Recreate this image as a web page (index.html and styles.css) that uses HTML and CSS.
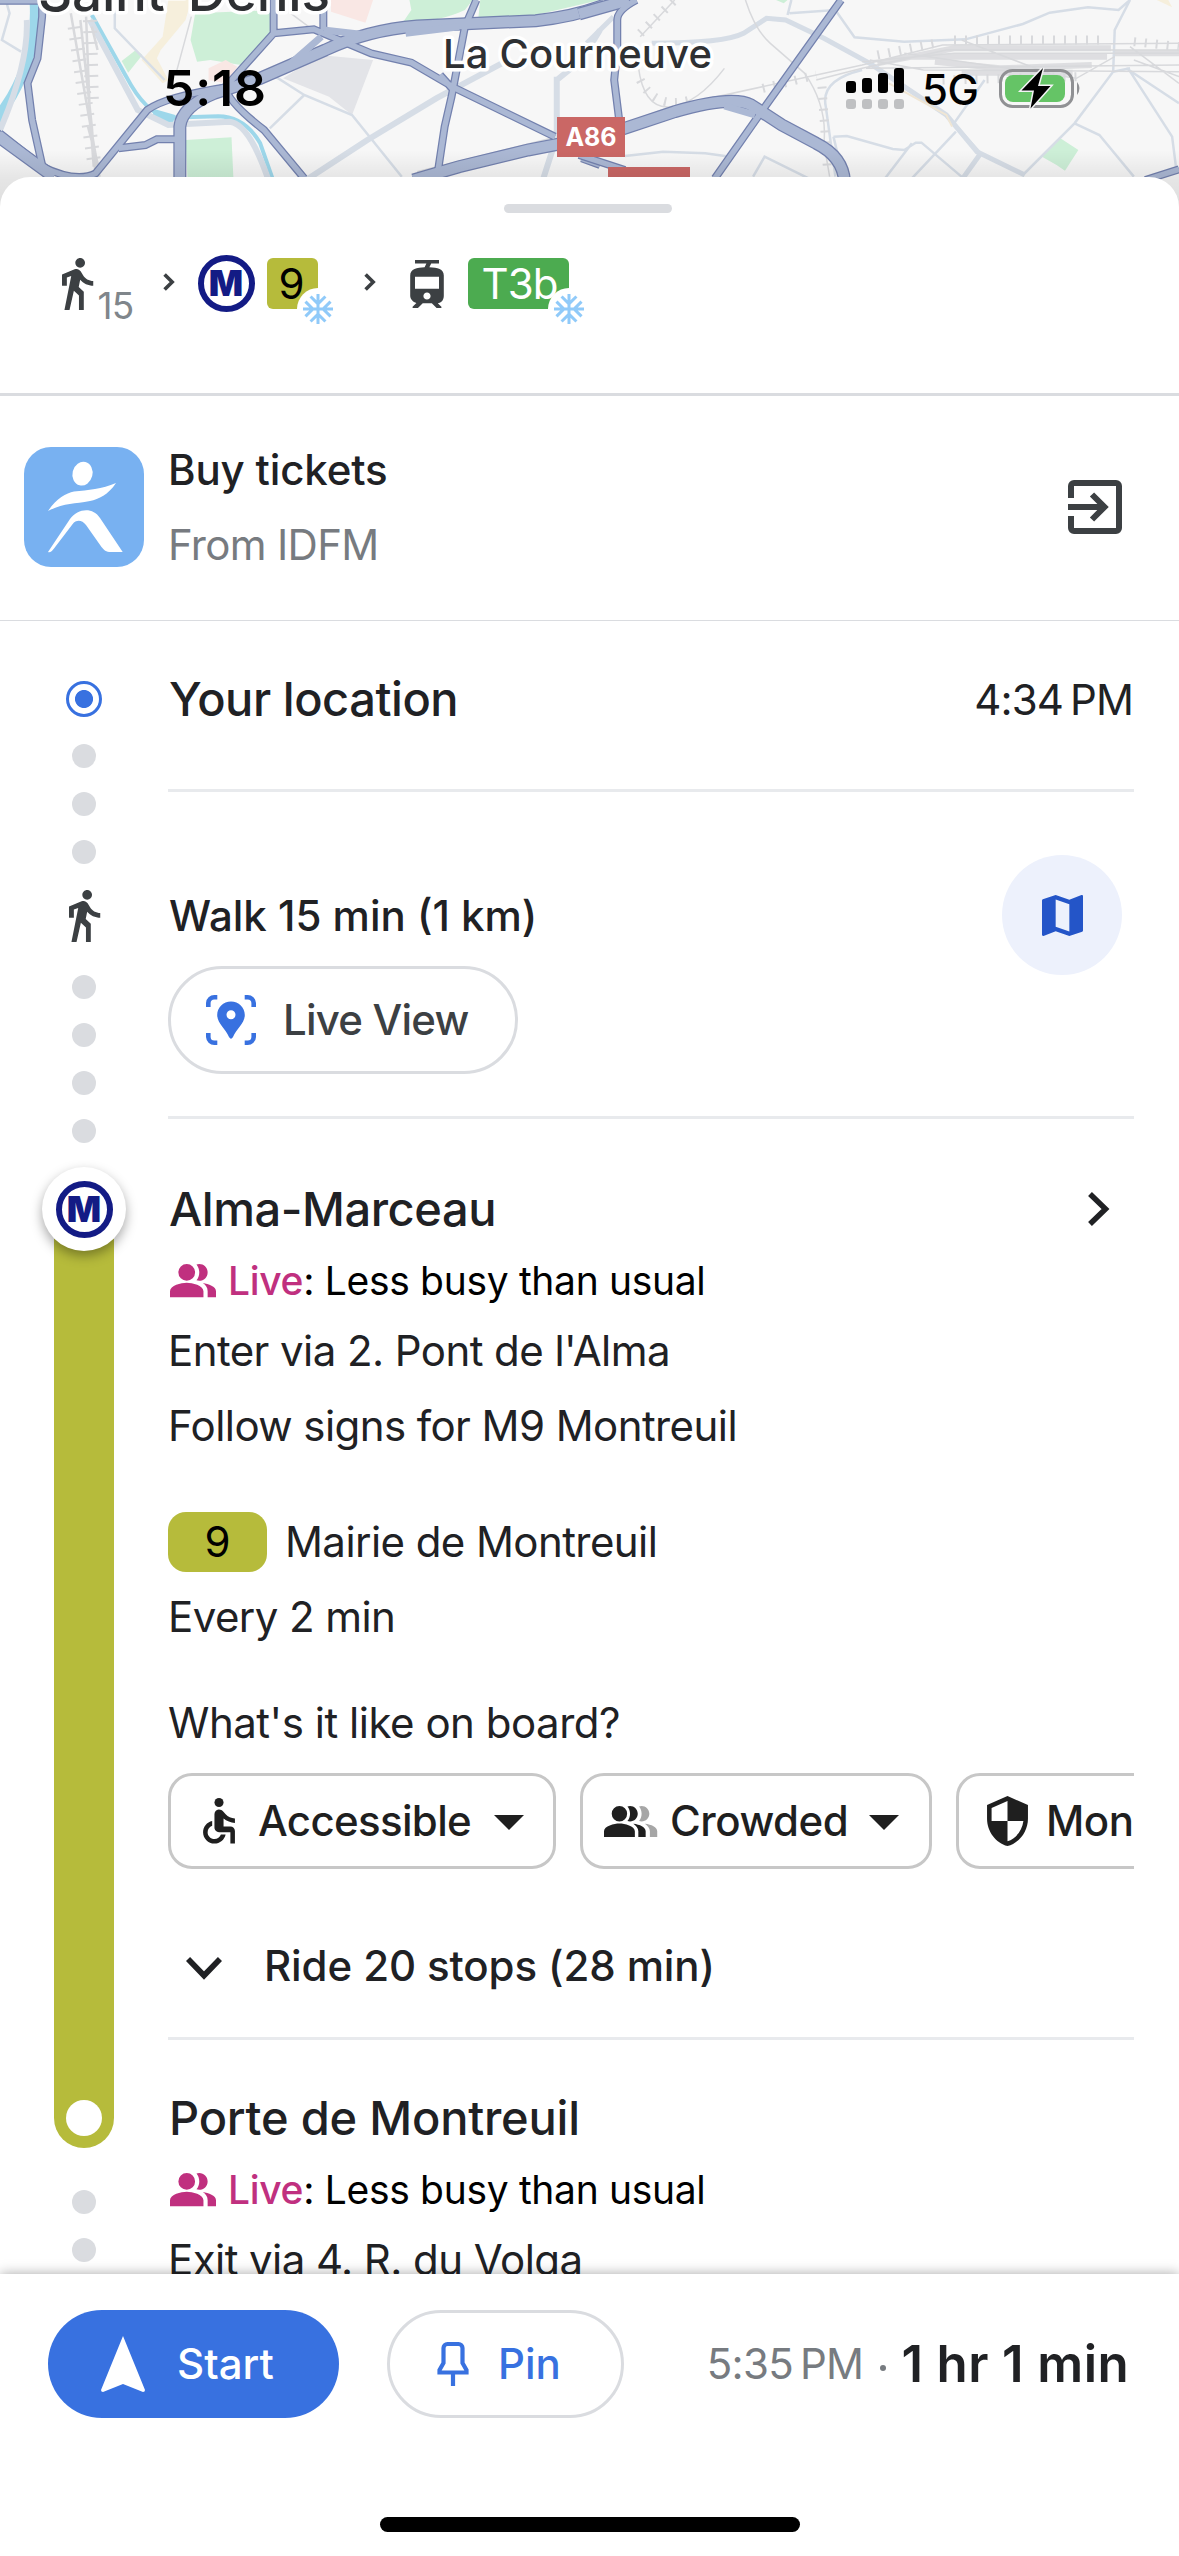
FILE: index.html
```html
<!DOCTYPE html>
<html lang="en">
<head>
<meta charset="utf-8">
<title>Transit directions</title>
<link rel="stylesheet" href="styles.css">
</head>
<body>
<svg class="sprite" aria-hidden="true">
  <symbol id="walk" viewBox="6 1.5 13 21.5"><path d="M13.5 5.5c1.1 0 2-.9 2-2s-.9-2-2-2-2 .9-2 2 .9 2 2 2zM9.8 8.9L7 23h2.1l1.8-8 2.1 2v6h2v-7.5l-2.1-2 .6-3C14.8 12 16.8 13 19 13v-2c-1.9 0-3.5-1-4.3-2.4l-1-1.6c-.4-.6-1-1-1.7-1-.3 0-.5.1-.8.1L6 8.3V13h2V9.6l1.8-.7z"/></symbol>
  <symbol id="snow" viewBox="0 0 24 24"><path d="M22 11h-4.17l3.24-3.24-1.41-1.42L15 11h-2V9l4.66-4.66-1.42-1.41L13 6.17V2h-2v4.17L7.76 2.93 6.34 4.34 11 9v2H9L4.34 6.34 2.93 7.76 6.17 11H2v2h4.17l-3.24 3.24 1.41 1.42L9 13h2v2l-4.66 4.66 1.42 1.41L11 17.83V22h2v-4.17l3.24 3.24 1.42-1.41L13 15v-2h2l4.66 4.66 1.41-1.42L17.83 13H22z"/></symbol>
  <symbol id="group" viewBox="1 4 22 16"><path d="M16.67 13.13C18.04 14.06 19 15.32 19 17v3h4v-3c0-2.18-3.57-3.47-6.33-3.87zM9 12a4 4 0 1 0 0-8 4 4 0 0 0 0 8zM15 12c2.21 0 4-1.79 4-4s-1.79-4-4-4c-.47 0-.91.1-1.33.24C14.5 5.27 15 6.58 15 8s-.5 2.73-1.33 3.76c.42.14.86.24 1.33.24zM9 13c-2.67 0-8 1.34-8 4v3h16v-3c0-2.66-5.33-4-8-4z"/></symbol>
  <symbol id="next" viewBox="0 0 12 18"><path d="M1.6 1.4 9.2 9l-7.6 7.6" fill="none" stroke="#3c4043" stroke-width="3.6"/></symbol>
</svg>

<header class="map">
  <svg class="map-art" viewBox="0 0 1179 220" width="1179" height="220">
    <defs>
      <g id="roads-left">
        <path d="M0 2H110V50L98 175 72 250 84 360 112 505M0 400 110 500Q200 550 250 520L385 330Q430 290 600 260M310 445 380 435 410 418H460M715 0V100L590 260Q590 300 690 390L795 535M715 100 820 88 970 160 1075 188 1190 265 1450 410M845 0V90M1245 0 1215 80 1180 290 1162 380 1145 510M1150 225 1185 270M1520 475 1568 495"/>
      </g>
      <g id="highways-left">
        <path d="M470 540V380Q475 320 560 280L680 235 850 150Q960 90 1090 78L1400 62Q1500 50 1580 15M-10 405 140 530M1080 540 1200 500 1380 450 1480 428"/>
      </g>
      <g id="roads-right">
        <path d="M685 0 480 330 355 535M150 0Q100 30 100 60V150L92 240 105 360M0 465 120 510M1480 540 1568 508"/>
      </g>
      <g id="highways-right">
        <path d="M0 42 130 0M80 400 250 335Q400 285 450 315L530 375 620 430Q690 470 694 545"/>
      </g>
    </defs>
    <rect width="1179" height="220" fill="#f7f7f7"/>
    <g transform="scale(.38265 .33333)">
      <path fill="#cdefd7" d="M510 40 725 30 710 110 630 195 550 180 515 185 498 120zM1070 0H1235L1215 30Q1150 65 1050 72L1075 30zM1255 0H1568L1400 45 1250 55zM318 183 355 150 372 165 335 218zM485 420 605 412 610 535H490z"/>
      <path fill="#f9e7e4" d="M865 0H975L955 68 865 35zM545 205 590 180 620 200 590 250 545 240z"/>
      <path fill="#f6efdc" d="M440 0H500L485 60 420 150 410 175 440 240 425 250 370 180 425 110z"/>
      <path fill="#e3e4e8" d="M740 235 835 165 975 180 920 345 860 290z"/>
      <g class="water"><path d="M90 0Q100 150 30 290L-15 370" stroke-width="10"/><path d="M240 45 330 230Q380 340 440 353L570 349Q640 350 680 430L712 535" stroke-width="4"/><path d="M400 340 455 358" stroke-width="9"/></g>
      <g class="minor" stroke-width="2.500"><path d="M15 0 25 40 5 120 55 155M300 30V85L430 240M500 265 M720 230 795 285L920 345 1050 530M795 285 705 385"/><path stroke-width="6" d="M70 60Q75 190 0 390M235 60 360 330 440 375 600 365Q650 370 700 535M800 540 960 420 1140 295 1320 185M1455 230V410L1420 535M1568 90 1520 180 1455 240"/></g>
      <g class="rail"><path stroke-width="2.500" d="M185 40 240 400 260 530M210 60 240 380 250 530M225 50 235 350 245 500M240 80 255 150M230 380 262 520"/><path stroke-width="1.500" d="M500 50 460 220M1090 515 1440 415M760 40 830 100"/><path stroke-width="14" stroke-dasharray="2 9" d="M195 80 245 480M235 60 240 300"/></g>
      <use href="#roads-left" class="casing"/><use href="#highways-left" class="casing wide"/>
      <use href="#roads-left" class="road"/><use href="#highways-left" class="road wide"/>
      <path d="M845 90 960 105M840 110 760 190M1060 100 1200 80" class="ramp"/>
    </g>
    <g transform="translate(579) scale(.38265 .33333)">
      <path fill="#cdefd7" d="M515 0H545L535 10zM1210 470 1258 415 1305 450 1270 512 1248 495z"/>
      <path fill="#f6efdc" d="M1510 0H1540L1550 22z"/>
      <g class="minor" stroke-width="2.500"><path d="M550 40 670 30 720 112 850 125 1010 118 1160 72 1230 38 1330 22 1410 30 1440 0 1400 90 1396 215 1295 370 1160 525M545 45 555 0M1060 240 980 370 1050 460M1430 205 1568 310M1435 205 1550 410 1560 500M1396 215 1440 205M1295 370 1360 405 1450 530M665 410 700 408 820 447 850 450 880 428 895 428 1005 535M800 535 870 430M985 395 870 535M665 410 690 530M120 468 220 455 330 460 395 470M455 530 485 470 600 535M740 210Q630 240 645 320L670 530"/><path stroke-width="5" d="M90 50 20 130M190 130Q380 130 430 100L490 55 540 60 640 115 760 190 960 345 1040 455 1165 525M1050 460 1000 540"/></g>
      <path d="M810 250 960 345 975 380" class="sand"/>
      <g class="rail"><path stroke-width="1.500" d="M435 0Q460 90 500 130L590 220Q650 320 640 430L655 530M250 0 160 110M155 200Q170 330 240 320T380 205M120 370 240 320 620 225 740 195 950 135 1568 130M620 240 740 205 960 150 1568 150M740 185 980 160 1568 160M750 205 1568 195M760 180 900 210 1568 215M850 160 1300 235 1400 170M1000 120 1250 230M1568 230 1450 180M1440 140 1568 250"/><path stroke-width="6" opacity=".8" d="M780 190 980 145 1390 145M930 185 1100 205 1340 195M1400 160H1568M860 170H1380M1000 218H1290"/><path stroke-width="9" stroke-dasharray="2 9" d="M980 120H1370M950 240 1300 230M780 165 930 130M1450 125 1568 140M635 260 650 520M160 100 250 0M480 265 620 225M160 240Q200 330 290 300"/></g>
      <use href="#roads-right" class="casing"/><use href="#highways-right" class="casing wide"/>
      <use href="#roads-right" class="road"/><use href="#highways-right" class="road wide"/>
      <path d="M380 318 460 345" class="ramp"/>
    </g>
    <g class="place"><text x="38" y="11" font-size="53" textLength="292">Saint-Denis</text><text x="443" y="68" font-size="40" textLength="269">La Courneuve</text></g>
    <rect x="557" y="117" width="68" height="40" fill="#ca6765"/><rect x="608" y="167" width="82" height="40" fill="#ca6765"/>
    <g class="shield"><text x="591" y="146">A86</text><text x="649" y="196">N186</text></g>
    <rect y="150" width="1179" height="70" fill="url(#shade)"/>
    <linearGradient id="shade" x2="0" y2="1"><stop stop-opacity="0"/><stop offset=".4" stop-opacity=".07"/><stop offset="1" stop-opacity=".12"/></linearGradient>
  </svg>
  <div class="status">
    <span class="clock">5:18</span>
    <svg class="signal" viewBox="0 0 58 41" width="58" height="41"><g><rect y="13" width="10" height="12" rx="3"/><rect x="16" y="10" width="10" height="15" rx="3"/><rect x="32" y="5" width="10" height="20" rx="3"/><rect x="48" width="10" height="25" rx="3"/></g><g fill="#bfc0c2"><rect y="31" width="10" height="10" rx="3"/><rect x="16" y="31" width="10" height="10" rx="3"/><rect x="32" y="31" width="10" height="10" rx="3"/><rect x="48" y="31" width="10" height="10" rx="3"/></g></svg>
    <span class="network">5G</span>
    <svg class="battery" viewBox="0 0 84 41" width="84" height="41"><rect x="1.5" y="2.5" width="72" height="36" rx="12" fill="none" stroke="#909194" stroke-width="3"/><rect x="6" y="7" width="60" height="27" rx="8" fill="#65c466"/><path d="M78 14q5 6 0 13z" fill="#909194"/><path d="M44 0 22.500 22.500H35L31.500 40.500 51.500 18H39z" stroke="#f3f4f5" stroke-width="3" paint-order="stroke"/></svg>
  </div>
</header>

<main class="sheet">
  <div class="handle"></div>
  <div class="summary">
    <svg class="ico-walk" width="31.500" height="52"><use href="#walk"/></svg><span class="walk-min">15</span>
    <svg class="next next-a" width="12" height="18"><use href="#next"/></svg>
    <span class="metro metro-lg">M</span>
    <span class="line line-9">9<i class="cool"><svg width="36" height="36"><use href="#snow"/></svg></i></span>
    <svg class="next next-b" width="12" height="18"><use href="#next"/></svg>
    <svg class="tram" viewBox="5 2 14 20" width="34" height="48"><path d="M19 16.940V8.500c0-2.790-2.610-3.400-6.010-3.490l.76-1.510H17V2H7v1.500h4.750l-.76 1.520C7.860 5.110 5 5.730 5 8.500v8.440c0 1.450 1.190 2.660 2.590 2.970L6 21.500v.5h2.230l2-2H14l2 2h2v-.5L16.500 20h-.08c1.690 0 2.580-1.370 2.580-3.060zm-7 1.560c-.83 0-1.500-.67-1.500-1.500s.67-1.500 1.500-1.500 1.500.67 1.500 1.500-.67 1.500-1.500 1.500zm5-4.500H7V9h10v5z"/></svg>
    <span class="line line-t3b">T3b<i class="cool"><svg width="36" height="36"><use href="#snow"/></svg></i></span>
  </div>

  <section class="tickets">
    <svg class="idfm" viewBox="0 0 120 120" width="120" height="120"><rect width="120" height="120" rx="27" fill="#78b1f1"/><g fill="#fff"><ellipse cx="58.500" cy="26.700" rx="10" ry="12" transform="rotate(14 58.500 26.700)"/><path d="M24 64C32 52 42 46 50 44.500 64 43 78 42 92 36 84 48 75 52 66 54 50 57 40 56 24 64Z"/><path d="M24 105 46 72C54 61 69 60 76 71L98.700 105H87C82 105 80 103 77.500 100L62 78C58 72.500 52 72.500 48.700 77L30 101.500C28 104 26 106 24 105Z"/></g></svg>
    <div class="tickets-text"><p class="strong buy">Buy tickets</p><p class="muted">From IDFM</p></div>
    <svg class="exit" viewBox="0 0 54 54" width="54" height="54"><path d="M3 18V6a3 3 0 0 1 3-3H48a3 3 0 0 1 3 3V48a3 3 0 0 1-3 3H6a3 3 0 0 1-3-3V36M0 27H36M24 14.500 36.500 27 24 39.500" fill="none" stroke="#3c4043" stroke-width="6"/></svg>
  </section>

  <section class="timeline">
    <div class="rail-col">
      <span class="origin"></span>
      <span class="dot"></span><span class="dot"></span><span class="dot"></span>
      <svg class="ico-walk step-walk" width="31.500" height="52"><use href="#walk"/></svg>
      <span class="dot"></span><span class="dot"></span><span class="dot"></span><span class="dot"></span>
      <div class="track"><span class="station"><span class="metro metro-lg">M</span></span><span class="stop"></span></div>
      <span class="dot"></span><span class="dot"></span>
    </div>
    <div class="steps">
      <div class="step start"><h2 class="loc">Your location</h2><span class="time">4:34<span class="thin"></span>PM</span></div>
      <div class="step walking">
        <div class="walk-row"><p class="strong wk">Walk 15 min (1 km)</p><span class="map-btn"><svg viewBox="3 3 18 18" width="41" height="41"><path d="M20.500 3l-.16.03L15 5.100 9 3 3.360 4.900c-.21.07-.36.25-.36.48V20.500c0 .28.22.5.5.5l.16-.03L9 18.900l6 2.100 5.640-1.900c.21-.07.36-.25.36-.48V3.500c0-.28-.22-.5-.5-.5zM15 19l-6-2.110V5l6 2.110V19z" fill="#2455c8"/></svg></span></div>
        <span class="pill live-view"><svg viewBox="0 0 50 50" width="50" height="50"><path d="M2.300 12V8a6 6 0 0 1 6-5.700h3M38.700 2.300h3a6 6 0 0 1 6 5.700v4M47.700 38v4a6 6 0 0 1-6 5.700h-3M11.300 47.700h-3a6 6 0 0 1-6-5.700v-4" fill="none" stroke="#3871e0" stroke-width="4.600"/><path fill-rule="evenodd" d="M25 6.500c-7.700 0-13.800 6-13.800 13.500 0 8.500 8.500 14 11.800 22q2 3.500 4 0c3.300-8 11.800-13.500 11.800-22 0-7.500-6.100-13.500-13.800-13.500zm0 8.800a4.500 4.500 0 1 1 0 9 4.500 4.500 0 0 1 0-9z" fill="#3871e0"/></svg>Live View</span>
      </div>
      <div class="step ride">
        <div class="station-row"><h2 class="alma">Alma-Marceau</h2><svg viewBox="0 0 24 36" width="24" height="36"><path d="M3 3 18.500 18 3 33" fill="none" stroke="#202124" stroke-width="5.500"/></svg></div>
        <p class="live"><svg width="46" height="33.500"><use href="#group"/></svg><span><b>Live</b>: Less busy than usual</span></p>
        <p class="body enter">Enter via 2. Pont de l'Alma</p>
        <p class="body follow">Follow signs for M9 Montreuil</p>
        <div class="line-row"><span class="badge">9</span><span class="body">Mairie de Montreuil</span></div>
        <p class="body every">Every 2 min</p>
        <p class="body ask">What's it like on board?</p>
        <div class="chips">
          <span class="chip accessible"><svg viewBox="5 2 14 20" width="32" height="45.500"><circle cx="12" cy="4" r="2"/><path d="M19 13v-2c-1.540.02-3.090-.75-4.070-1.830l-1.290-1.430c-.17-.19-.38-.34-.61-.45-.01 0-.01-.01-.02-.01H13c-.35-.2-.75-.3-1.190-.26C10.760 7.110 10 8.040 10 9.090V15c0 1.100.9 2 2 2h5v5h2v-5.500c0-1.100-.9-2-2-2h-3v-3.450c1.290 1.070 3.250 1.940 5 1.950zm-6.170 5c-.41 1.160-1.520 2-2.830 2-1.660 0-3-1.340-3-3 0-1.310.84-2.410 2-2.830V12.100c-2.280.46-4 2.480-4 4.900 0 2.760 2.240 5 5 5 2.420 0 4.440-1.720 4.900-4h-2.070z"/></svg><span class="lbl">Accessible</span><i class="caret"></i></span>
          <span class="chip crowded"><svg viewBox="1 4 28 16" width="54" height="31"><path id="behind" d="M16.200 13.130C17.500 14.060 18.800 15.320 18.800 17v3h3.800v-3c0-2.180-3-3.470-6.400-3.870zM14.500 12c2.210 0 4-1.790 4-4s-1.790-4-4-4c-.47 0-.91.1-1.330.24C14 5.270 14.500 6.580 14.500 8s-.5 2.730-1.330 3.760c.42.14.86.24 1.330.24z"/><use href="#behind" x="6" fill="#a6a6a6"/><path d="M9 12a4 4 0 1 0 0-8 4 4 0 0 0 0 8zM9 13c-2.670 0-8 1.340-8 4v3h16v-3c0-2.660-5.330-4-8-4z"/></svg><span class="lbl">Crowded</span><i class="caret"></i></span>
          <span class="chip monitored"><svg viewBox="3 1 18 22" width="41" height="50"><path d="M12 1L3 5v6c0 5.550 3.840 10.740 9 12 5.160-1.260 9-6.450 9-12V5l-9-4zm0 10.990h7c-.53 4.120-3.280 7.790-7 8.940V12H5V6.300l7-3.110v8.800z"/></svg><span class="lbl">Monitored</span></span>
        </div>
        <div class="stops"><svg viewBox="0 0 36 24" width="36" height="24"><path d="M2 3 18 19.500 34 3" fill="none" stroke="#202124" stroke-width="5.800"/></svg><p class="strong rd">Ride 20 stops (28 min)</p></div>
      </div>
      <div class="step arrive">
        <h2 class="porte">Porte de Montreuil</h2>
        <p class="live"><svg width="46" height="33.500"><use href="#group"/></svg><span><b>Live</b>: Less busy than usual</span></p>
        <p class="body exit-via">Exit via 4. R. du Volga</p>
      </div>
    </div>
  </section>
</main>

<footer class="actions">
  <div class="action-row">
    <span class="pill go"><svg viewBox="0 0 46 58" width="46" height="58"><path d="M23 1 45 55q0 2-2 2L23 49 3 57q-2 0-2-2z" fill="#fff"/></svg>Start</span>
    <span class="pill pin"><svg viewBox="0 0 32 46" width="32" height="46"><path d="M6.500 7a4 4 0 0 1 4-4h11a4 4 0 0 1 4 4V22L29.500 29v2.500h-27V29L6.500 22zM16 31.500V45" fill="none" stroke="#3871e0" stroke-width="4.200"/></svg>Pin</span>
    <p class="eta"><span>5:35<span class="thin"></span>PM</span><i></i><strong>1 hr 1 min</strong></p>
  </div>
  <div class="home"></div>
</footer>
</body>
</html>
```

FILE: styles.css
```css
* { box-sizing: border-box; }
body { margin: 0; width: 1179px; height: 2556px; overflow: hidden; display: flex; flex-direction: column; background: #fff; color: #202124; font: 400 42px/60px Inter, "Liberation Sans", sans-serif; white-space: nowrap; }
p, h2 { margin: 0; }
svg { display: block; flex: none; }
.sprite { position: absolute; width: 0; height: 0; }

/* Map strip and status bar */
.map { position: relative; height: 177px; flex: none; }
.map-art path, .map-art use { vector-effect: non-scaling-stroke; }
.water { fill: none; stroke: #9dd7ea; }
.minor { fill: none; stroke: #d6dde6; }
.rail { fill: none; stroke: #d8d9dc; }
.sand { fill: none; stroke: #f0e6d4; stroke-width: 2; }
.casing { fill: none; stroke: #7381ae; stroke-width: 8px; }
.casing.wide { stroke-width: 13px; }
.road { fill: none; stroke: #abb8d4; stroke-width: 5.5px; }
.road.wide { stroke-width: 10.5px; }
.ramp { fill: none; stroke: #abb8d4; stroke-width: 7px; }
.place { fill: #2e3033; font-weight: 500; stroke: #fff; stroke-width: 7px; paint-order: stroke; stroke-linejoin: round; }
.shield { fill: #fff; font-size: 25px; font-weight: 700; text-anchor: middle; }
.status { position: absolute; inset: 0 0 auto; display: flex; align-items: center; height: 176px; padding-left: 163px; color: #000; }
.clock { width: 683px; font-size: 50px; font-weight: 600; letter-spacing: .8px; }
.network { margin: 3px 0 0 18px; width: 77px; font-size: 42px; font-weight: 500; letter-spacing: -.5px; }

/* Sheet */
.sheet { position: relative; flex: 1; min-height: 0; overflow: hidden; display: flex; flex-direction: column; background: #fff; border-radius: 30px 30px 0 0; }
.handle { width: 168px; height: 9px; margin: 27px 0 0 504px; border-radius: 5px; background: #dadce0; flex: none; }
.summary { height: 183px; flex: none; display: flex; align-items: flex-start; padding: 45px 0 0 62px; border-bottom: 3px solid #dadce0; }
.ico-walk { fill: #3c4043; }
.walk-min { width: 64px; padding: 18px 0 0 4px; font-size: 37px; color: #80868b; letter-spacing: -.8px; }
.next-a { margin: 15px 0 0 5px; }
.next-b { margin: 15px 0 0 46px; }
.metro { width: 57px; height: 57px; border: 6px solid #131b85; border-radius: 50%; display: grid; place-items: center; color: #131b85; font-size: 36px; font-weight: 900; line-height: 45px; }
.summary .metro { margin: -3px 0 0 23px; }
.line { position: relative; height: 51px; border-radius: 6px; line-height: 51px; margin-left: 12px; }
.line-9 { width: 51px; padding-left: 12px; background: #b6bb3b; color: #000; }
.line-t3b { width: 101px; margin-left: 24px; padding-left: 14px; background: #4cab50; color: #fff; letter-spacing: -.9px; }
.cool { position: absolute; right: -21px; bottom: -21px; width: 42px; height: 42px; padding: 3px; border-radius: 50%; background: #fff; fill: #90caf9; }
.tram { margin: 2px 0 0 34px; fill: #3c4043; }

.tickets { height: 225px; flex: none; display: flex; align-items: center; padding: 0 57px 2px 24px; border-bottom: 1px solid #dadce0; }
.tickets-text { flex: 1; padding: 0 0 0 24px; line-height: 75px; }
.strong { font-weight: 500; }
.buy { letter-spacing: -.15px; }
.muted { color: #777b80; letter-spacing: -.7px; }

/* Timeline */
.timeline { flex: 1; min-height: 0; display: flex; }
.rail-col { width: 168px; padding-top: 60px; display: flex; flex-direction: column; align-items: center; flex: none; }
.rail-col > * { flex: none; }
.origin { width: 36px; height: 36px; margin-bottom: 3px; border: 3px solid #3871e0; border-radius: 50%; background: radial-gradient(circle, #3871e0 8.600px, #fff 9.400px); }
.dot { width: 24px; height: 24px; margin-top: 24px; border-radius: 50%; background: #dadce0; }
.step-walk { margin: 26px 0 9px 2px; }
.track { position: relative; width: 60px; height: 939px; margin: 66px 0 18px; display: flex; align-items: flex-end; justify-content: center; padding-bottom: 12px; border-radius: 0 0 30px 30px; background: #b6bb3b; }
.station { position: absolute; top: -42px; left: -12px; width: 84px; height: 84px; border-radius: 50%; background: #fff; display: grid; place-items: center; box-shadow: 0 5px 12px rgba(0, 0, 0, .35); }
.stop { width: 36px; height: 36px; border-radius: 50%; background: #fff; }

.steps { width: 966px; }
.step { border-bottom: 3px solid #e8eaed; }
.start { height: 171px; padding-bottom: 13px; display: flex; align-items: center; justify-content: space-between; }
h2 { padding-left: 1px; font-size: 47px; font-weight: 500; line-height: 60px; letter-spacing: -.45px; }
.porte { letter-spacing: -.2px; }
.time { padding: 2px 1px 0 0; letter-spacing: -.9px; }
.thin { display: inline-block; width: 7px; }
.walking { height: 327px; padding-top: 63px; }
.walk-row { height: 120px; display: flex; align-items: center; justify-content: space-between; }
.wk { padding: 2px 0 0 1px; }
.map-btn { width: 120px; height: 120px; margin-right: 12px; border-radius: 50%; background: #edf1fc; display: grid; place-items: center; }
.pill { height: 108px; border-radius: 54px; display: inline-flex; align-items: center; font-weight: 500; }
.live-view { position: relative; width: 350px; margin-top: -9px; padding-left: 35px; gap: 27px; border: 3px solid #dadce0; color: #3c4043; letter-spacing: -.8px; }
.ride { padding-top: 60px; height: 921px; }
.station-row { display: flex; align-items: center; justify-content: space-between; padding-right: 23px; }
.live { display: flex; align-items: center; gap: 12px; margin-top: 12px; padding-left: 2px; font-size: 39px; color: #000; fill: #c0307f; letter-spacing: -.32px; }
.live b { font-weight: 500; color: #c0307f; }
.body { letter-spacing: -.57px; }
.enter, .follow, .exit-via { line-height: 75px; }
.enter, .exit-via { margin-top: 2px; }
.line-row { display: flex; gap: 18px; margin-top: 49px; }
.badge { width: 99px; height: 60px; border-radius: 18px; background: #b6bb3b; color: #000; text-align: center; }
.every { margin-top: 15px; }
.ask { margin-top: 46px; letter-spacing: -.48px; }
.chips { height: 96px; margin-top: 20px; display: flex; gap: 24px; overflow: hidden; }
.chip { height: 96px; flex: none; border: 3px solid #c7c7c7; border-radius: 24px; display: flex; align-items: center; font-weight: 500; color: #1f1f1f; fill: #1f1f1f; }
.accessible { width: 388px; padding-left: 32px; gap: 23px; letter-spacing: -.65px; }
.crowded { width: 352px; padding-left: 21px; gap: 12px; letter-spacing: -.5px; }
.monitored { padding: 0 32px 0 28px; gap: 18px; letter-spacing: -.5px; }
.caret { width: 0; height: 0; margin: 3px 30px 0 auto; border: 15px solid transparent; border-top-color: #1f1f1f; border-bottom: 0; }
.accessible .caret { margin-right: 31px; }
.stops { display: flex; align-items: center; margin-top: 67px; padding-left: 18px; gap: 42px; }
.stops svg { margin-top: 3px; }
.rd { letter-spacing: -.1px; }
.arrive { padding-top: 48px; border: 0; }

/* Footer */
.actions { position: relative; height: 282px; flex: none; background: #fff; box-shadow: 0 0 12px rgba(0, 0, 0, .35); }
.action-row { display: flex; align-items: center; padding: 36px 50px 0 48px; }
.go { width: 291px; padding-left: 52px; gap: 31px; background: #3871e0; color: #fff; }
.pin { width: 237px; margin-left: 48px; padding-left: 47px; gap: 29px; border: 3px solid #dadce0; color: #3871e0; }
.eta { margin-left: auto; display: flex; align-items: center; color: #777b80; letter-spacing: -.7px; }
.eta i { width: 6px; height: 6px; margin: 8px 15px 0 17px; border-radius: 50%; background: #777b80; }
.eta strong { font-size: 51px; font-weight: 600; color: #202124; letter-spacing: .4px; }
.home { width: 420px; height: 15px; margin: 99px auto 0; border-radius: 8px; background: #000; }
```
